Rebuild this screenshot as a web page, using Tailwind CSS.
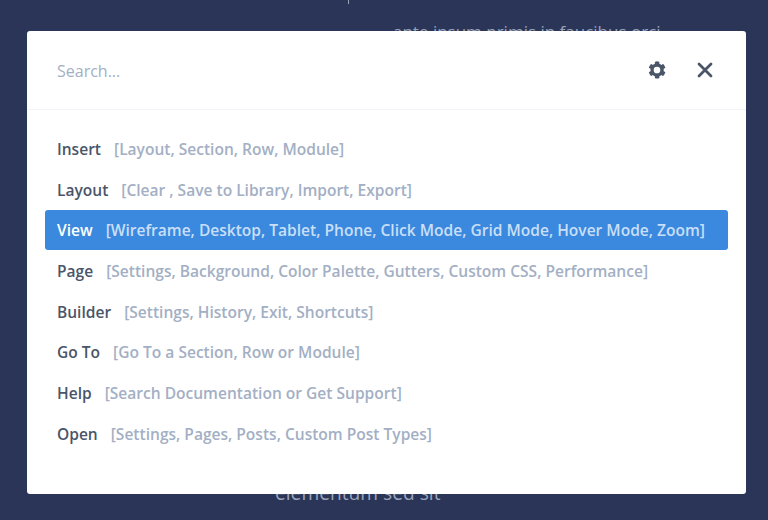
<!doctype html>
<html><head><meta charset="utf-8"><script src="https://cdn.jsdelivr.net/npm/@tailwindcss/browser@4"></script></head>
<body class="m-0">
<div class="relative w-[768px] h-[520px] overflow-hidden bg-[#2a3558] font-['Open_Sans',sans-serif]">
  <div class="absolute left-[393px] top-[20px] text-[17px] leading-[24px] text-[#9aa4bb] whitespace-nowrap">ante ipsum primis in faucibus orci</div>
  <div class="absolute left-[275px] top-[481px] text-[19.2px] leading-[24px] text-[#9aa4bb] whitespace-nowrap">elementum sed sit</div>
  <div class="absolute left-[348px] top-[-14px] w-px h-[18px] bg-[#9aa4bb]"></div>
  <div class="absolute left-[333px] top-[514px] text-[17px] leading-[24px] text-[#9aa4bb] whitespace-nowrap">nithe</div>
  <div class="relative pt-[31px] pl-[27px]">
    <div class="w-[719px] h-[463px] bg-white rounded-[3px] flex flex-col">
      <div class="h-[79px] shrink-0 border-b border-[#f1f4f8] flex items-center pl-[30px] pr-[32px]">
        <span class="flex-1 text-[16px] leading-[24px] pt-px text-[#a3afc4]">Search...</span>
        <svg class="w-[18px] h-[18px] mr-[30px]" viewBox="0 0 512 512" fill="#4a5568" fill-rule="evenodd"><path d="M487 315l-42-25a194 194 0 0 0 0-68l42-25c5-3 7-9 5-14-11-35-30-67-54-93-4-4-10-5-15-2l-42 25a190 190 0 0 0-59-34V30c0-6-4-11-9-12a196 196 0 0 0-108 0c-5 1-9 6-9 12v49a190 190 0 0 0-59 34L95 88c-5-3-11-2-15 2-24 26-43 58-54 93-2 5 0 11 5 14l42 25a194 194 0 0 0 0 68l-42 25c-5 3-7 9-5 14 11 35 30 67 54 93 4 4 10 5 15 2l42-25a190 190 0 0 0 59 34v49c0 6 4 11 9 12 36 8 73 8 108 0 5-1 9-6 9-12v-49a190 190 0 0 0 59-34l42 25c5 3 11 2 15-2 24-26 43-58 54-93 2-5 0-11-5-14zM256 351a95 95 0 1 1 0-190 95 95 0 0 1 0 190z"/></svg>
        <svg class="w-[18px] h-[18px]" viewBox="0 0 18 18" fill="none" stroke="#4a5568" stroke-width="2.8" stroke-linecap="round"><path d="M3 3l12 12M15 3L3 15"/></svg>
      </div>
      <div class="flex flex-col pt-[19px] px-[18px] text-[15.55px] leading-[40px] font-semibold whitespace-nowrap">
        <div class="flex h-[40.7px] px-[12px] gap-[13px]"><span class="text-[#4a5568]">Insert</span><span class="text-[#a3afc4]">[Layout, Section, Row, Module]</span></div>
        <div class="flex h-[40.7px] px-[12px] gap-[13px]"><span class="text-[#4a5568]">Layout</span><span class="text-[#a3afc4]">[Clear , Save to Library, Import, Export]</span></div>
        <div class="flex h-[40px] px-[12px] gap-[13px] mb-[0.7px] bg-[#3a89de] rounded-[3px]"><span class="text-white">View</span><span class="text-[#c9dff7]">[Wireframe, Desktop, Tablet, Phone, Click Mode, Grid Mode, Hover Mode, Zoom]</span></div>
        <div class="flex h-[40.7px] px-[12px] gap-[13px]"><span class="text-[#4a5568]">Page</span><span class="text-[#a3afc4]">[Settings, Background, Color Palette, Gutters, Custom CSS, Performance]</span></div>
        <div class="flex h-[40.7px] px-[12px] gap-[13px]"><span class="text-[#4a5568]">Builder</span><span class="text-[#a3afc4]">[Settings, History, Exit, Shortcuts]</span></div>
        <div class="flex h-[40.7px] px-[12px] gap-[13px]"><span class="text-[#4a5568]">Go To</span><span class="text-[#a3afc4]">[Go To a Section, Row or Module]</span></div>
        <div class="flex h-[40.7px] px-[12px] gap-[13px]"><span class="text-[#4a5568]">Help</span><span class="text-[#a3afc4]">[Search Documentation or Get Support]</span></div>
        <div class="flex h-[40.7px] px-[12px] gap-[13px]"><span class="text-[#4a5568]">Open</span><span class="text-[#a3afc4]">[Settings, Pages, Posts, Custom Post Types]</span></div>
      </div>
    </div>
  </div>
</div>
</body></html>
